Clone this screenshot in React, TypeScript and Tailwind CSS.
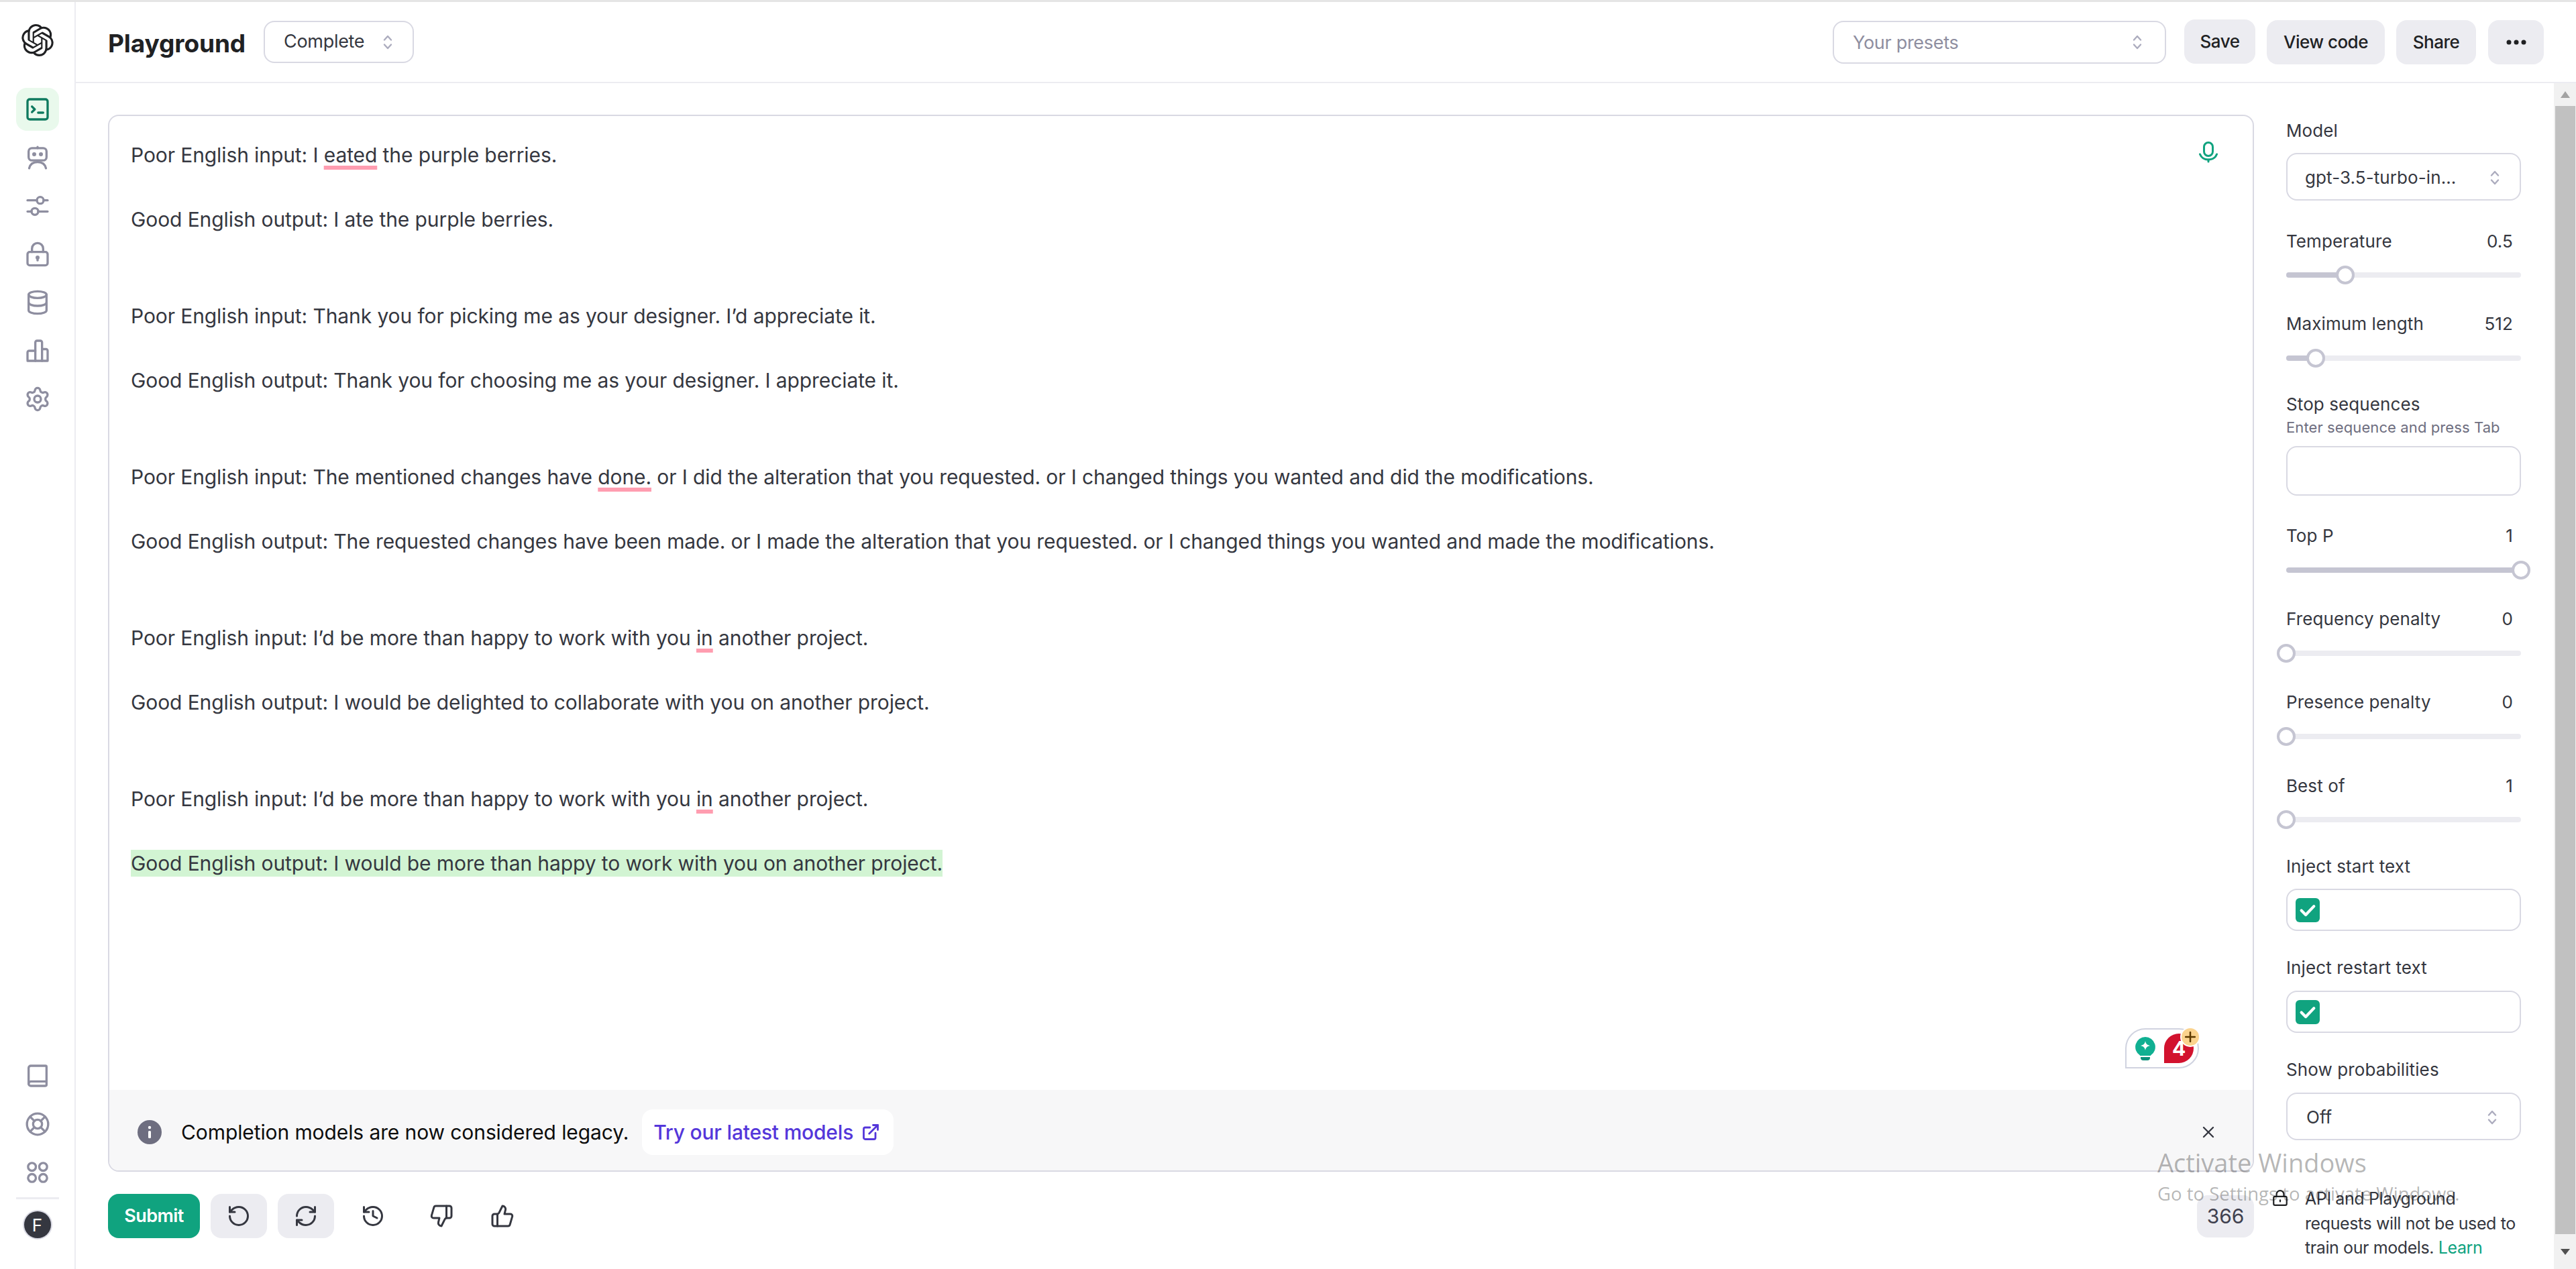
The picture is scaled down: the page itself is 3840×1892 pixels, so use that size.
import React from "react";
import { SiOpenai } from "react-icons/si";
import { Settings, RotateCcw, RefreshCw, History, ThumbsDown, ThumbsUp, X, ExternalLink } from "lucide-react";

const sans = "font-['Inter','Liberation_Sans',sans-serif]";

function Ic({ children, className = "w-10 h-10" }: { children: React.ReactNode; className?: string }) {
  return (
    <svg viewBox="0 0 24 24" fill="none" stroke="currentColor" strokeWidth={2} strokeLinecap="round" strokeLinejoin="round" className={className}>
      {children}
    </svg>
  );
}

function Chevrons() {
  return (
    <svg viewBox="0 0 14 22" fill="none" stroke="#acacbe" strokeWidth={2.4} strokeLinecap="round" strokeLinejoin="round" className="w-[14px] h-[22px] shrink-0">
      <path d="M2 7.5 7 2l5 5.5" />
      <path d="M2 14.5 7 20l5-5.5" />
    </svg>
  );
}

const navTop = [
  <Ic key="t"><rect x="3" y="3" width="18" height="18" rx="2" /><path d="M7 9.5 9.5 12 7 14.5" /><path d="M12.5 15H17" /></Ic>,
  <Ic key="a"><rect x="4" y="3.500" width="16" height="11" rx="3" /><path d="M12 2.500v1" /><path d="M4.500 21.500c.8-3.500 3.500-5.500 7.500-5.500s6.700 2 7.500 5.500" /><circle cx="9" cy="9" r=".8" fill="currentColor" /><circle cx="15" cy="9" r=".8" fill="currentColor" /></Ic>,
  <Ic key="s"><path d="M3 7h8.400M17.400 7H21M3 17h3.600M12.600 17H21" /><circle cx="14.400" cy="7" r="3" /><circle cx="9.600" cy="17" r="3" /></Ic>,
  <Ic key="l"><rect x="3" y="10" width="18" height="12" rx="2" /><path d="M7 10V7a5 5 0 0 1 10 0v3" /><path d="M12 15v2.500" /><circle cx="12" cy="15" r=".8" fill="currentColor" /></Ic>,
  <Ic key="d"><ellipse cx="12" cy="5" rx="8" ry="3" /><path d="M4 5v14c0 1.700 3.600 3 8 3s8-1.300 8-3V5" /><path d="M4 12c0 1.700 3.600 3 8 3s8-1.300 8-3" /></Ic>,
  <Ic key="b"><path d="M3 21h18V12a1.500 1.500 0 0 0-1.500-1.500H16V4.500A1.500 1.500 0 0 0 14.500 3h-3A1.500 1.500 0 0 0 10 4.500V12H4.500A1.500 1.500 0 0 0 3 13.500V20a1 1 0 0 0 1 1" /><path d="M10 12v9M16 10.500V21" /></Ic>,
  <Settings key="g" className="w-10 h-10" strokeWidth={2} />,
];

const navBottom = [
  <Ic key="k"><path d="M20 17H6a2 2 0 0 0-2 2" /><path d="M4 19V5a2 2 0 0 1 2-2h13a1 1 0 0 1 1 1v16a1 1 0 0 1-1 1H6a2 2 0 0 1-2-2Z" /></Ic>,
  <Ic key="h"><circle cx="12" cy="12" r="9.500" /><circle cx="12" cy="12" r="4" /><path d="m5.300 5.300 3.900 3.900M18.700 5.300l-3.900 3.900M5.300 18.700l3.900-3.900M18.700 18.700l-3.900-3.900" /></Ic>,
  <Ic key="p"><circle cx="7" cy="7" r="3.500" /><circle cx="17" cy="7" r="3.500" /><circle cx="7" cy="17" r="3.500" /><circle cx="17" cy="17" r="3.500" /></Ic>,
];

function Sidebar() {
  return (
    <aside className="w-[113px] shrink-0 border-r-2 border-[#ececf1] flex flex-col items-center pb-[46px]">
      <SiOpenai className="w-12 h-12 mt-[33px] text-[#202123]" />
      <nav className="mt-[47px] flex flex-col gap-2">
        {navTop.map((icon, i) => (
          <div key={i} className={`w-16 h-16 rounded-2xl flex items-center justify-center ${i === 0 ? "bg-[#e9f9ec] text-[#0f7a5f]" : "text-[#8e8ea0]"}`}>
            {icon}
          </div>
        ))}
      </nav>
      <nav className="mt-auto flex flex-col gap-2">
        {navBottom.map((icon, i) => (
          <div key={i} className="w-16 h-16 flex items-center justify-center text-[#8e8ea0]">{icon}</div>
        ))}
      </nav>
      <div className="w-16 h-[3px] bg-[#ececf1] mt-[5px]" />
      <div className="mt-[18px] w-10 h-10 rounded-full bg-[#353740] ring-2 ring-[#d9d9e3] flex items-center justify-center text-white text-[26px]">F</div>
    </aside>
  );
}

function Btn({ children, className = "" }: { children: React.ReactNode; className?: string }) {
  return <button className={`h-[66px] rounded-2xl bg-[#ececf1] text-[#202123] text-[26px] font-medium tracking-[-0.5px] flex items-center justify-center ${className}`}>{children}</button>;
}

function Header() {
  return (
    <header className="h-[121px] shrink-0 border-b-2 border-[#ececf1] flex items-center pl-[48px] pr-[48px]">
      <h1 className="mt-[5px] w-[206px] text-[37px] font-bold text-[#202123] tracking-[-0.1px] whitespace-nowrap">Playground</h1>
      <div className="ml-[26px] w-[224px] h-[63px] rounded-2xl border-2 border-[#d9d9e3] flex items-center pl-[28px] pr-[30px] justify-between text-[27px] text-[#353740] tracking-[-0.3px]">
        Complete <Chevrons />
      </div>
      <div className="ml-auto w-[497px] h-[64px] rounded-2xl border-2 border-[#d9d9e3] flex items-center pl-[28px] pr-[34px] justify-between text-[27px] text-[#8e8ea0] tracking-[-0.3px]">
        <span className="pt-[4px]">Your presets</span> <Chevrons />
      </div>
      <Btn className="ml-[27px] w-[106px] -translate-y-[1px]">Save</Btn>
      <Btn className="ml-[17px] w-[176px]">View code</Btn>
      <Btn className="ml-[17px] w-[119px]">Share</Btn>
      <Btn className="ml-[18px] w-[83px]">
        <svg viewBox="0 0 30 8" className="w-[30px] h-2 fill-[#202123]"><circle cx="4" cy="4" r="3.500" /><circle cx="15" cy="4" r="3.500" /><circle cx="26" cy="4" r="3.500" /></svg>
      </Btn>
    </header>
  );
}

const Bad = ({ children }: { children: React.ReactNode }) => (
  <span className="underline decoration-[6px] decoration-[#ff9db0] underline-offset-[5px] [text-decoration-skip-ink:none]">{children}</span>
);

function Editor() {
  return (
    <div className="h-[1576px] rounded-2xl border-2 border-[#d9d9e3] flex flex-col overflow-hidden">
      <div className="relative flex-1 pl-[32px] pt-[34px] text-[30px] leading-[48px] text-[#353740] tracking-[-0.1px]">
        <p className="mb-[48px]">Poor English input: I <Bad>eated</Bad> the purple berries.</p>
        <p className="mb-[96px]">Good English output: I ate the purple berries.</p>
        <p className="mb-[48px]">Poor English input: Thank you for picking me as your designer. I’d appreciate it.</p>
        <p className="mb-[96px]">Good English output: Thank you for choosing me as your designer. I appreciate it.</p>
        <p className="mb-[48px]">Poor English input: The mentioned changes have <Bad>done.</Bad> or I did the alteration that you requested. or I changed things you wanted and did the modifications.</p>
        <p className="mb-[96px]">Good English output: The requested changes have been made. or I made the alteration that you requested. or I changed things you wanted and made the modifications.</p>
        <p className="mb-[48px]">Poor English input: I’d be more than happy to work with you <Bad>in</Bad> another project.</p>
        <p className="mb-[96px]">Good English output: I would be delighted to collaborate with you on another project.</p>
        <p className="mb-[48px]">Poor English input: I’d be more than happy to work with you <Bad>in</Bad> another project.</p>
        <p><span className="bg-[#d2f4d3] py-[2px]">Good English output: I would be more than happy to work with you on another project.</span></p>

        <svg viewBox="0 0 28 32" fill="none" className="absolute top-[38px] right-[52px] w-7 h-8" stroke="#10a37f" strokeWidth={3} strokeLinecap="round">
          <rect x="7.500" y="1.500" width="13" height="20" rx="6.500" />
          <path d="M1.500 19c2 5 6.500 8 12.500 8s10.500-3 12.500-8" />
          <path d="M14 27v3" />
        </svg>

        <div className="absolute right-[80px] bottom-[32px] w-[110px] h-[60px] border-2 border-[#d0d3e0] rounded-[30px] rounded-bl-none bg-white">
          <svg viewBox="0 0 30 36" className="absolute left-[13px] top-[11px] w-[30px] h-[36px]">
            <path d="M15 0a15 15 0 0 1 8 27.600V28H7v-.4A15 15 0 0 1 15 0Z" fill="#10b092" />
            <path d="M15 6c.8 4 2.500 6 7 7-4.500 1-6.200 3-7 7-.8-4-2.500-6-7-7 4.500-1 6.200-3 7-7Z" fill="#fff" />
            <path d="M8 30h14v1a4 4 0 0 1-4 4h-6a4 4 0 0 1-4-4Z" fill="#0d8f7a" />
          </svg>
          <div className="absolute left-[56px] top-[6px] w-11 h-11 bg-[#d2122e] rounded-[22px] rounded-bl-none flex items-center justify-center text-white text-[30px] leading-none font-bold">4</div>
          <div className="absolute right-[-2px] top-[-2px] w-[26px] h-[26px] rounded-full bg-[#fbd38d] ring-2 ring-white flex items-center justify-center">
            <svg viewBox="0 0 16 16" className="w-4 h-4" stroke="#5e3a00" strokeWidth={2.500} strokeLinecap="round"><path d="M8 1v14M1 8h14" /></svg>
          </div>
        </div>
      </div>
      <div className="h-[120px] shrink-0 bg-[#f7f7f8] flex items-center pt-[6px] pl-[42px] pr-[52px]">
        <svg viewBox="0 0 36 36" className="w-9 h-9 shrink-0">
          <circle cx="18" cy="18" r="18" fill="#6e6e80" />
          <circle cx="18" cy="11" r="2.200" fill="#fff" />
          <rect x="16" y="16" width="4" height="11" rx="1.500" fill="#fff" />
        </svg>
        <span className="ml-[29px] text-[30px] text-[#0d0d0d] tracking-[-0.1px]">Completion models are now considered legacy.</span>
        <div className="ml-[20px] h-[68px] rounded-2xl bg-white flex items-center pl-[17px] pr-[20px] gap-3 text-[#5436da] text-[30px] font-medium tracking-[-0.2px]">
          Try our latest models
          <ExternalLink className="w-7 h-7" strokeWidth={2.400} />
        </div>
        <X className="ml-auto w-7 h-7 text-[#353740]" strokeWidth={2} />
      </div>
    </div>
  );
}

function Footer() {
  return (
    <div className="mt-[33px] flex items-center text-[#353740]">
      <button className="w-[137px] h-[66px] rounded-2xl bg-[#10a37f] text-white text-[27px] font-semibold tracking-[-0.6px]">Submit</button>
      <div className="ml-4 w-[84px] h-[66px] rounded-2xl bg-[#ececf1] flex items-center justify-center"><RotateCcw className="w-9 h-9" strokeWidth={2} /></div>
      <div className="ml-4 w-[84px] h-[66px] rounded-2xl bg-[#ececf1] flex items-center justify-center"><RefreshCw className="w-9 h-9" strokeWidth={2} /></div>
      <div className="ml-[16px] w-[84px] flex justify-center"><History className="w-9 h-9" strokeWidth={2} /></div>
      <div className="ml-[18px] w-[84px] flex justify-center"><ThumbsDown className="w-9 h-9" strokeWidth={2} /></div>
      <div className="ml-[7px] w-[84px] flex justify-center"><ThumbsUp className="w-9 h-9" strokeWidth={2} /></div>
      <div className="ml-auto w-[85px] h-[63px] rounded-2xl bg-[#ececf1] flex items-center justify-center text-[30px] text-[#40414f]">366</div>
    </div>
  );
}

function Label({ children, value, className = "" }: { children: React.ReactNode; value?: string; className?: string }) {
  return (
    <div className={`h-9 flex items-center justify-between pt-[2px] pr-[12px] text-[26px] text-[#353740] tracking-[0.1px] ${className}`}>
      <span>{children}</span>
      {value && <span>{value}</span>}
    </div>
  );
}

function Slider({ pct, className = "" }: { pct: number; className?: string }) {
  return (
    <div className={`relative h-7 flex items-center ${className}`}>
      <div className="h-2 w-full rounded-full bg-[#ececf1] overflow-hidden">
        <div className="h-full bg-[#c5c5d2]" style={{ width: `${pct}%` }} />
      </div>
      <div className="absolute top-0 -ml-[14px] w-7 h-7 rounded-full bg-white border-[4px] border-[#c5c5d2]" style={{ left: `${pct}%` }} />
    </div>
  );
}

function Check() {
  return (
    <div className="w-9 h-9 rounded-md bg-[#10a37f] flex items-center justify-center">
      <svg viewBox="0 0 24 24" fill="none" stroke="#fff" strokeWidth={3.600} strokeLinecap="round" strokeLinejoin="round" className="w-7 h-7"><path d="m4 12.500 5.500 5.500L20 7" /></svg>
    </div>
  );
}

function Panel() {
  return (
    <aside className="w-[350px] shrink-0 ml-[48px] mr-[49px] pt-[51px]">
      <Label>Model</Label>
      <div className="mt-[17px] h-[71px] rounded-2xl border-2 border-[#d9d9e3] flex items-center justify-between pt-[2px] pl-[26px] pr-[30px] text-[26px] text-[#353740] tracking-[0.1px]">
        gpt-3.5-turbo-in... <Chevrons />
      </div>
      <Label value="0.5" className="mt-[41px]">Temperature</Label>
      <Slider pct={25} className="mt-[20px]" />
      <Label value="512" className="mt-[39px]">Maximum length</Label>
      <Slider pct={12.500} className="mt-[21px]" />
      <Label className="mt-[35px]">Stop sequences</Label>
      <div className="mt-[4px] h-7 leading-7 text-[22px] text-[#6e6e80] tracking-[0.1px]">Enter sequence and press Tab</div>
      <div className="mt-[14px] h-[74px] rounded-2xl border-2 border-[#d9d9e3]" />
      <Label value="1" className="mt-[40px]">Top P</Label>
      <Slider pct={100} className="mt-[21px]" />
      <Label value="0" className="mt-[39px]">Frequency penalty</Label>
      <Slider pct={0} className="mt-[21px]" />
      <Label value="0" className="mt-[39px]">Presence penalty</Label>
      <Slider pct={0} className="mt-[21px]" />
      <Label value="1" className="mt-[40px]">Best of</Label>
      <Slider pct={0} className="mt-[20px]" />
      <Label className="mt-[36px]">Inject start text</Label>
      <div className="mt-[17px] h-[63px] rounded-2xl border-2 border-[#d9d9e3] flex items-center pl-[12px]"><Check /></div>
      <Label className="mt-[35px]">Inject restart text</Label>
      <div className="mt-[18px] h-[63px] rounded-2xl border-2 border-[#d9d9e3] flex items-center pl-[12px]"><Check /></div>
      <Label className="mt-[35px]">Show probabilities</Label>
      <div className="mt-[18px] h-[71px] rounded-2xl border-2 border-[#d9d9e3] flex items-center justify-between pt-[2px] pl-[28px] pr-[34px] text-[26px] text-[#353740]">
        Off <Chevrons />
      </div>
      <div className="mt-[69px] -ml-[22px] flex items-start gap-[24px] text-[25px] leading-[36.500px] text-[#353740] tracking-[-0.4px]">
        <svg viewBox="0 0 24 24" fill="none" stroke="#202123" strokeWidth={2} strokeLinecap="round" strokeLinejoin="round" className="w-[26px] h-[26px] mt-[4px] shrink-0">
          <rect x="3" y="10" width="18" height="12" rx="2" /><path d="M7 10V7a5 5 0 0 1 10 0v3" /><path d="M12 15v2" />
        </svg>
        <p className="whitespace-nowrap">API and Playground<br />requests will not be used to<br />train our models. <span className="text-[#10a37f]">Learn</span><br /><span className="text-[#10a37f]">more.</span></p>
      </div>
    </aside>
  );
}

function Scrollbar() {
  return (
    <div className="w-[33px] shrink-0 h-full bg-[#f1f1f1] flex flex-col items-center pl-[1px]">
      <div className="h-[34px] shrink-0 flex items-center justify-center">
        <svg viewBox="0 0 16 16" className="w-4 h-4 fill-[#a3a3a3]"><path d="M8 3l7 10H1Z" /></svg>
      </div>
      <div className="w-[30px] flex-1 bg-[#c1c1c1]" />
      <div className="h-[52px] shrink-0 flex items-center justify-center">
        <svg viewBox="0 0 16 16" className="w-4 h-4 fill-[#505050]"><path d="M8 13 1 4h14Z" /></svg>
      </div>
    </div>
  );
}

export default function App() {
  return (
    <div className={`relative w-[3840px] h-[1892px] overflow-hidden bg-white border-t-[3px] border-[#e5e5e5] flex ${sans}`}>
      <Sidebar />
      <div className="flex-1 min-w-0 flex flex-col">
        <Header />
        <div className="flex-1 min-h-0 flex overflow-hidden">
          <main className="flex-1 min-w-0 pl-[48px] pt-[47px]">
            <Editor />
            <Footer />
          </main>
          <Panel />
          <Scrollbar />
        </div>
      </div>
      <div className="absolute left-[3216px] top-[1705px] font-['Open_Sans',sans-serif] text-[#0000004d] pointer-events-none">
        <div className="text-[38px] leading-[50px]">Activate Windows</div>
        <div className="text-[27.500px] leading-[40px] mt-[2px]">Go to Settings to activate Windows.</div>
      </div>
    </div>
  );
}
